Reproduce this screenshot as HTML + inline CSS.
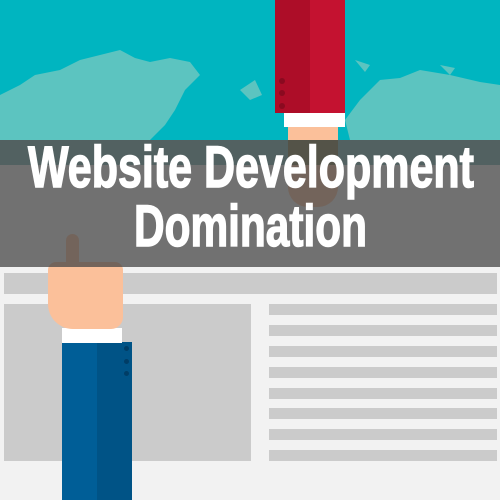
<!DOCTYPE html>
<html><head><style>
body{margin:0;width:500px;height:500px;overflow:hidden;position:relative;background:#f2f2f2;font-family:"Liberation Sans",sans-serif}
div{position:absolute}
.l{left:269px;width:228px;height:11px;background:#cbcbcb}
</style></head><body>
<div style="left:0;top:0;width:500px;height:140px;background:#00b5c0"></div>
<svg style="position:absolute;left:0;top:0" width="500" height="140">
<path d="M0 95 L20 85 L35 75 L60 70 L80 60 L100 55 L120 50 L135 58 L150 62 L170 58 L190 62 L200 75 L185 90 L175 110 L165 125 L150 140 L0 140Z" fill="#5cc4c0"/>
<path d="M240 90 L255 80 L262 95 L250 100Z" fill="#5cc4c0"/>
<path d="M360 100 L380 80 L400 78 L420 70 L450 75 L480 82 L500 85 L500 140 L350 140 L345 120Z" fill="#5cc4c0"/>
<path d="M355 60 L370 65 L365 72Z M440 65 L455 68 L450 75Z" fill="#5cc4c0"/>
</svg>
<div style="left:0;top:267px;width:500px;height:233px;background:#f2f2f2"></div>
<div style="left:4px;top:273px;width:493px;height:21px;background:#cbcbcb"></div>
<div style="left:4px;top:304px;width:247px;height:157px;background:#cbcbcb"></div>
<div class="l" style="top:304px"></div><div class="l" style="top:325px"></div><div class="l" style="top:346px"></div><div class="l" style="top:367px"></div><div class="l" style="top:388px"></div><div class="l" style="top:408px"></div><div class="l" style="top:429px"></div><div class="l" style="top:450px"></div>
<div style="left:275px;top:0;width:35px;height:113px;background:#ad0d28"></div>
<div style="left:310px;top:0;width:35px;height:113px;background:#c41230"></div>
<div style="left:284px;top:113px;width:61px;height:14px;background:#fff"></div>
<div style="left:288px;top:127px;width:50px;height:80px;background:#fbc09a;border-radius:0 0 20px 20px"></div>
<div style="left:62px;top:342px;width:35px;height:158px;background:#005e97"></div>
<div style="left:97px;top:342px;width:35px;height:158px;background:#005386"></div>
<div style="left:62px;top:328px;width:60px;height:15px;background:#fff"></div>
<div style="left:48px;top:262px;width:75px;height:67px;background:#fbc09a;border-radius:8px 8px 12px 25px"></div>
<div style="left:66px;top:234px;width:13px;height:40px;background:#fbc09a;border-radius:7px"></div>
<div style="left:124px;top:346px;width:5px;height:5px;border-radius:50%;background:#003d66"></div>
<div style="left:124px;top:359px;width:5px;height:5px;border-radius:50%;background:#003d66"></div>
<div style="left:124px;top:371px;width:5px;height:5px;border-radius:50%;background:#003d66"></div>
<div style="left:279px;top:78px;width:6px;height:6px;border-radius:50%;background:#8a0a20"></div>
<div style="left:279px;top:90px;width:6px;height:6px;border-radius:50%;background:#8a0a20"></div>
<div style="left:279px;top:103px;width:6px;height:6px;border-radius:50%;background:#8a0a20"></div>
<div style="left:0;top:140px;width:500px;height:25px;background:rgba(20,40,40,0.72)"></div>
<div style="left:0;top:165px;width:500px;height:102px;background:rgba(70,70,70,0.75)"></div>
<svg style="position:absolute;left:0;top:0" width="500" height="500">
<g fill="#fff" stroke="#fff" stroke-width="1.5" font-family="Liberation Sans, sans-serif" font-weight="bold" font-size="58">
<text x="28" y="187" textLength="446" lengthAdjust="spacingAndGlyphs">Website Development</text>
<text x="134" y="246" textLength="233" lengthAdjust="spacingAndGlyphs">Domination</text>
</g>
</svg>
</body></html>
